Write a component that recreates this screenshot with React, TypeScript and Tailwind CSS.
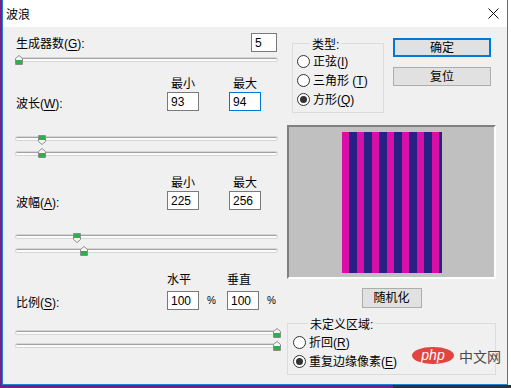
const FONT = "font-['Liberation_Sans','Noto_Sans_CJK_SC',sans-serif]";

function Key({ children }: { children: string }) {
  return <span className="underline underline-offset-2">{children}</span>;
}

function Thumb({ up, className }: { up: boolean; className: string }) {
  return (
    <svg width="8" height="10" viewBox="0 0 8 10" className={`absolute ${className}`}>
      {up ? (
        <>
          <path d="M0.5 3.5 L4 0.5 L7.5 3.5 V9.5 H0.5 Z" fill="#f6f6f6" stroke="#8c8c8c" />
          <rect x="1" y="5" width="6" height="4" fill="#2fae4e" />
        </>
      ) : (
        <>
          <path d="M0.5 0.5 H7.5 V6.5 L4 9.5 L0.5 6.5 Z" fill="#f6f6f6" stroke="#8c8c8c" />
          <rect x="1" y="1" width="6" height="4" fill="#2fae4e" />
        </>
      )}
    </svg>
  );
}

function Track({ className, children }: { className: string; children: React.ReactNode }) {
  return (
    <div
      className={`relative h-[3px] rounded-[2px] border-t border-[#a2a2a2] bg-[#fbfbfb] shadow-[0_0_0_1px_#d6d6d6] ${className}`}
    >
      {children}
    </div>
  );
}

function Field({ value, focused }: { value: string; focused?: boolean }) {
  return (
    <div
      className={`flex h-[19px] w-[32px] items-center border bg-white pl-[3px] ${
        focused ? 'border-[#0078d7]' : 'border-[#7a7a7a]'
      }`}
    >
      {value}
    </div>
  );
}

function Radio({ checked, children }: { checked?: boolean; children: React.ReactNode }) {
  return (
    <div className="flex h-[19px] items-center gap-[3px]">
      <span className="flex h-[13px] w-[13px] items-center justify-center rounded-full border border-[#333333] bg-white">
        {checked && <span className="h-[7px] w-[7px] rounded-full bg-[#333333]" />}
      </span>
      <span>{children}</span>
    </div>
  );
}

const STRIPES = [
  7, 8, 7, 8, 7, 8, 7, 8, 7, 8, 7, 8, 7, 3,
];

export default function App() {
  return (
    <div className={`relative flex h-[388px] w-[511px] flex-col bg-white text-[12px] leading-[14px] text-black ${FONT}`}>
      <div className="flex h-[385px]">
        <div className="w-[2px] bg-[#7e1b89]" />
        <div className="flex w-[506px] flex-col border-x border-b border-[#1883d7] bg-[#f0f0f0]">
          {/* title bar */}
          <div className="flex h-[27px] items-center justify-between bg-white pr-[8px] pl-[3px]">
            <span className="text-[12px] font-['Noto_Sans_CJK_SC',sans-serif]">波浪</span>
            <svg width="11" height="11" viewBox="0 0 11 11">
              <path d="M0.5 0.5 L10.5 10.5 M10.5 0.5 L0.5 10.5" stroke="#111" strokeWidth="1" />
            </svg>
          </div>

          <div className="flex pl-[13px]">
            {/* left column */}
            <div className="flex w-[261px] flex-col">
              <div className="mt-[6px] flex h-[19px] items-center justify-between">
                <span className="pt-[2px]">
                  生成器数(<Key>G</Key>):
                </span>
                <div className="flex h-[19px] w-[26px] items-center border border-[#7a7a7a] bg-white pl-[3px]">5</div>
              </div>
              <Track className="mt-[6px]">
                <Thumb up className="top-[-4px] left-[-1px]" />
              </Track>

              {/* 波长 */}
              <div className="mt-[16px] flex h-[14px]">
                <div className="w-[151px]" />
                <div className="w-[32px] text-center">最小</div>
                <div className="ml-[30px] w-[32px] text-center">最大</div>
              </div>
              <div className="mt-[1px] flex items-center">
                <span className="w-[151px] pt-[5px]">
                  波长(<Key>W</Key>):
                </span>
                <Field value="93" />
                <div className="w-[30px]" />
                <Field value="94" focused />
              </div>
              <Track className="mt-[26px]">
                <Thumb up={false} className="top-[-3px] left-[22px]" />
              </Track>
              <Track className="mt-[12px]">
                <Thumb up className="top-[-5px] left-[22px]" />
              </Track>

              {/* 波幅 */}
              <div className="mt-[21px] flex h-[14px]">
                <div className="w-[151px]" />
                <div className="w-[32px] text-center">最小</div>
                <div className="ml-[30px] w-[32px] text-center">最大</div>
              </div>
              <div className="mt-[1px] flex items-center">
                <span className="w-[151px] pt-[5px]">
                  波幅(<Key>A</Key>):
                </span>
                <Field value="225" />
                <div className="w-[30px]" />
                <Field value="256" />
              </div>
              <Track className="mt-[25px]">
                <Thumb up={false} className="top-[-3px] left-[57px]" />
              </Track>
              <Track className="mt-[11px]">
                <Thumb up className="top-[-4px] left-[64px]" />
              </Track>

              {/* 比例 */}
              <div className="mt-[21px] flex h-[14px]">
                <div className="w-[151px]" />
                <div className="w-[60px]">水平</div>
                <div className="w-[32px]">垂直</div>
              </div>
              <div className="mt-[4px] flex items-center">
                <span className="w-[151px] pt-[5px]">
                  比例(<Key>S</Key>):
                </span>
                <Field value="100" />
                <span className="w-[28px] pl-[8px] text-[10px]">%</span>
                <Field value="100" />
                <span className="pl-[8px] text-[10px]">%</span>
              </div>
              <Track className="mt-[21px]">
                <Thumb up className="top-[-4px] left-[257px]" />
              </Track>
              <Track className="mt-[10px]">
                <Thumb up className="top-[-4px] left-[257px]" />
              </Track>
            </div>

            {/* right column */}
            <div className="ml-[10px] flex w-[209px] flex-col">
              <div className="flex items-start">
                <fieldset className="mt-[9px] ml-[5px] w-[92px] border border-[#dcdcdc] pb-[3px] pl-[4px]">
                  <legend className="relative top-[2px] ml-[13px] h-[14px] px-[2px]">类型:</legend>
                  <div className="pt-[2px]">
                    <Radio>
                      正弦(<Key>I</Key>)
                    </Radio>
                    <Radio>
                      三角形 (<Key>T</Key>)
                    </Radio>
                    <Radio checked>
                      方形(<Key>Q</Key>)
                    </Radio>
                  </div>
                </fieldset>
                <div className="mt-[11px] ml-[9px] flex w-[98px] flex-col">
                  <div className="flex h-[19px] items-center justify-center border-2 border-[#0078d7] bg-[#e1e1e1]">
                    确定
                  </div>
                  <div className="mt-[10px] flex h-[19px] items-center justify-center border border-[#adadad] bg-[#e1e1e1]">
                    复位
                  </div>
                </div>
              </div>

              <div className="mt-[12px] flex h-[154px] w-[209px] items-center justify-center border-2 border-t-[#808080] border-r-white border-b-white border-l-[#808080] bg-[#c0c0c0]">
                <div className="flex h-[141px] w-[100px]">
                  {STRIPES.map((w, i) => (
                    <div
                      key={i}
                      className={`h-full ${i % 2 === 0 ? 'bg-[#d70fa8]' : 'bg-[#262183]'}`}
                      style={{ width: w }}
                    />
                  ))}
                </div>
              </div>

              <div className="mt-[9px] flex justify-center">
                <div className="flex h-[20px] w-[60px] items-center justify-center border border-[#adadad] bg-[#e1e1e1]">
                  随机化
                </div>
              </div>

              <fieldset className="mt-[8px] w-[209px] border border-[#dcdcdc] pb-[3px] pl-[5px]">
                <legend className="relative top-[2px] ml-[15px] h-[14px] px-[2px]">未定义区域:</legend>
                <div className="pt-[3px]">
                  <Radio>
                    折回(<Key>R</Key>)
                  </Radio>
                  <Radio checked>
                    重复边缘像素(<Key>E</Key>)
                  </Radio>
                </div>
              </fieldset>
            </div>
          </div>
        </div>
        <div className="flex-1 bg-white" />
      </div>
      <div className="flex h-[3px]">
        <div className="w-[393px] bg-[#7e1b89]" />
        <div className="flex-1 bg-[#2e2e3c]" />
      </div>

      {/* watermark */}
      <div className="absolute top-[347px] left-[412px] flex items-center gap-[5px]">
        <div className="flex h-[17px] w-[42px] items-center justify-center rounded-[50%] bg-[#e2453f] pb-[2px] text-[14px] italic text-white font-['Liberation_Sans',sans-serif]">
          php
        </div>
        <span className="text-[14px] text-[#4a4a4a] font-['Noto_Sans_CJK_SC',sans-serif]">中文网</span>
      </div>
    </div>
  );
}
